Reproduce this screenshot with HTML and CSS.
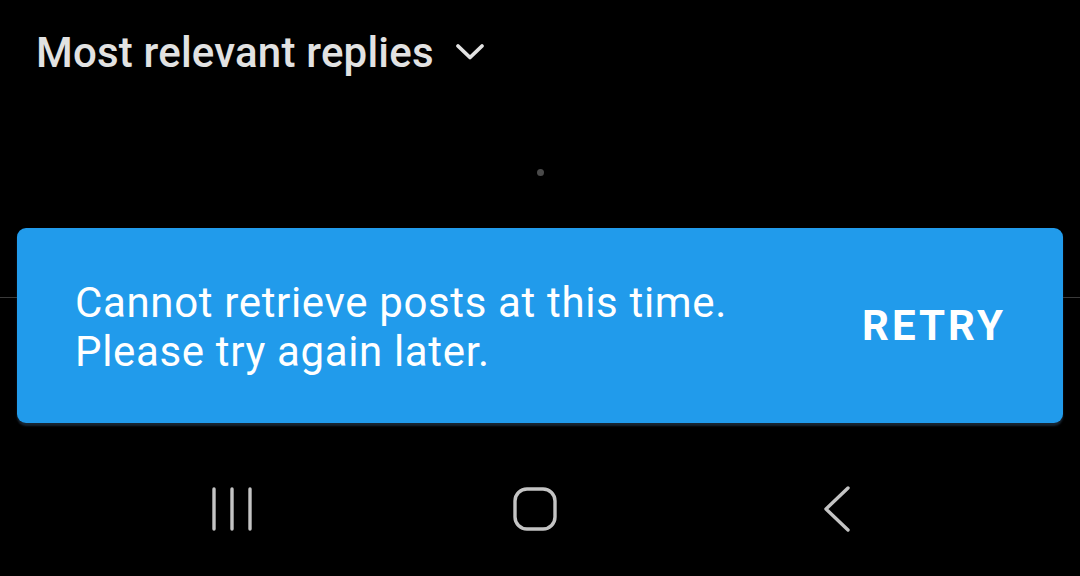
FILE: index.html
```html
<!DOCTYPE html>
<html>
<head>
<meta charset="utf-8">
<link rel="stylesheet" href="styles.css">
</head>
<body>
<div class="screen">
  <div class="header">
    <span class="sort-label">Most relevant replies</span>
    <svg class="chev" width="30" height="20" viewBox="0 0 30 20"><path d="M3 4 L15 15.5 L27 4" fill="none" stroke="#e2e2e2" stroke-width="3.8" stroke-linecap="round" stroke-linejoin="round"/></svg>
  </div>
  <div class="loading"><span class="dot"></span></div>
  <div class="divider"></div>
  <div class="spacer"></div>
  <div class="navbar">
    <div class="slot">
      <svg width="44" height="46" viewBox="0 0 44 46"><g stroke="#c4c4c4" stroke-width="3.4" stroke-linecap="round"><line x1="3" y1="3" x2="3" y2="43"/><line x1="21" y1="3" x2="21" y2="43"/><line x1="39" y1="3" x2="39" y2="43"/></g></svg>
    </div>
    <div class="slot">
      <svg width="46" height="46" viewBox="0 0 46 46"><rect x="3" y="3" width="40" height="40" rx="12" fill="none" stroke="#c4c4c4" stroke-width="3.4"/></svg>
    </div>
    <div class="slot">
      <svg width="30" height="48" viewBox="0 0 30 48"><path d="M26 3 L4 24 L26 45" fill="none" stroke="#c4c4c4" stroke-width="3.4" stroke-linecap="round" stroke-linejoin="round"/></svg>
    </div>
  </div>
  <div class="snackbar">
    <div class="snack-text">Cannot retrieve posts at this time.<br>Please try again later.</div>
    <div class="snack-action">RETRY</div>
  </div>
</div>
</body>
</html>
```
FILE: styles.css
```css
html, body {
  margin: 0;
  padding: 0;
  background: #000;
}
.screen {
  position: relative;
  width: 1080px;
  height: 576px;
  display: flex;
  flex-direction: column;
  overflow: hidden;
  font-family: Roboto, "Liberation Sans", sans-serif;
}
.header {
  height: 104px;
  display: flex;
  align-items: center;
  padding-left: 36px;
  gap: 21px;
}
.sort-label {
  color: #e2e2e2;
  font-size: 42px;
  font-weight: 500;
  letter-spacing: 0.2px;
}
.chev {
  display: block;
  margin-top: 0;
}
.loading {
  height: 136px;
  display: flex;
  justify-content: center;
  align-items: center;
}
.dot {
  width: 7px;
  height: 7px;
  border-radius: 50%;
  background: #4a4a4a;
}
.divider {
  margin-top: 57px;
  height: 1px;
  background: #3a3a3a;
}
.spacer {
  flex: 1;
}
.navbar {
  height: 134px;
  display: flex;
  align-items: center;
  padding-left: 82px;
}
.slot {
  width: 302px;
  display: flex;
  justify-content: center;
}
.snackbar {
  position: absolute;
  left: 17px;
  right: 17px;
  top: 228px;
  height: 195px;
  background: #219beb;
  border-radius: 9px;
  box-shadow: 0 3px 2px rgba(40, 60, 80, 0.6);
  display: flex;
  align-items: center;
  justify-content: space-between;
  padding: 0 57px 0 58px;
  box-sizing: border-box;
}
.snack-text {
  color: #fff;
  font-size: 42px;
  line-height: 49px;
  letter-spacing: 0.65px;
  margin-top: 3px;
}
.snack-action {
  color: #fff;
  font-size: 42px;
  font-weight: 700;
  letter-spacing: 3px;
}
```
